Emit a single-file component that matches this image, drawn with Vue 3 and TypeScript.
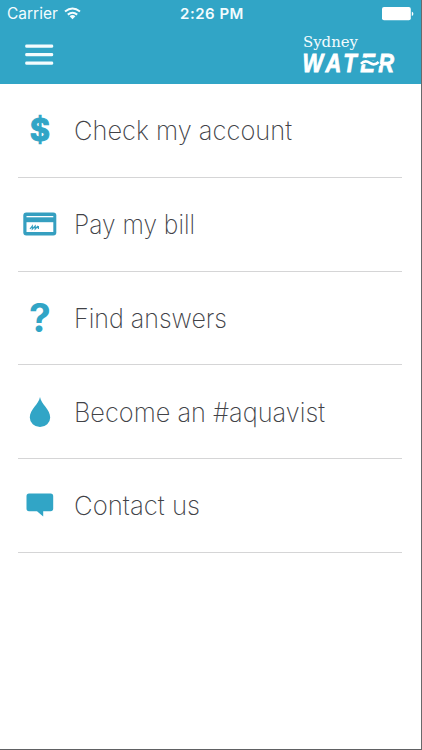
<script setup lang="ts">
interface MenuItem {
  id: string
  label: string
  width: number
}

const items: MenuItem[] = [
  { id: 'account', label: 'Check my account', width: 218 },
  { id: 'bill', label: 'Pay my bill', width: 121 },
  { id: 'answers', label: 'Find answers', width: 153 },
  { id: 'aquavist', label: 'Become an #aquavist', width: 251 },
  { id: 'contact', label: 'Contact us', width: 126 },
]
</script>

<template>
  <main class="screen">
    <header class="header">
      <div class="status">
        <div class="carrier">
          <span>Carrier</span>
          <svg class="wifi" width="17" height="13" viewBox="0 0 17 13" fill="none" stroke="#f4fcfe" stroke-width="2">
            <path d="M1 4.6Q8.5-1.6 16 4.6M3.8 7.6Q8.5 3.8 13.2 7.6" />
            <path d="M5.6 9.2Q8.5 7 11.4 9.2L8.5 12.2Z" fill="#f4fcfe" stroke="none" />
          </svg>
        </div>
        <span class="time">2:26 PM</span>
        <svg class="battery" width="33" height="14" viewBox="0 0 33 14" fill="#fff">
          <rect x="1" width="28.8" height="13.3" rx="2" />
          <path d="M30.8 4.4Q32.4 5 32.4 6.7T30.8 9Z" />
        </svg>
      </div>
      <div class="bar">
        <svg class="burger" width="29" height="22" viewBox="0 0 29 22" fill="#f4fcfe">
          <rect x="0.2" y="0.4" width="28" height="3.4" rx="1.4" />
          <rect x="0.2" y="8.9" width="28" height="3.4" rx="1.4" />
          <rect x="0.2" y="17.4" width="28" height="3.4" rx="1.4" />
        </svg>
        <svg class="logo" width="96" height="42" viewBox="0 0 96 42">
          <text class="sydney" x="0" y="12.6" textLength="55" lengthAdjust="spacingAndGlyphs">Sydney</text>
          <g transform="translate(-.5 38) scale(.84 1)">
            <text class="water" x="0" y="0" textLength="109" lengthAdjust="spacing">WATER</text>
          </g>
          <path d="M56 28.9C60 25.4 63 26.4 66.5 28.8S73 30.6 76 28.4" fill="none" stroke="#31a5c6" stroke-width="6.6" />
          <path d="M58 29.9C61 26.4 63.8 26.8 66.8 28.9S72.5 31 75.6 28" fill="none" stroke="#fff" stroke-width="2.6" />
        </svg>
      </div>
    </header>
    <nav class="menu">
      <a v-for="item in items" :key="item.id" class="item">
        <span class="icon">
          <svg v-if="item.id === 'account'" class="glyph" width="30" height="60" viewBox="0 0 30 60">
            <text class="dollar" x="15" y="41.2" text-anchor="middle">$</text>
          </svg>
          <svg v-else-if="item.id === 'bill'" width="34" height="24" viewBox="0 0 34 24">
            <rect x="0.3" y="0.4" width="33" height="23" rx="3" fill="#359fc0" />
            <rect x="3.5" y="4" width="26.8" height="1.3" fill="#fff" />
            <rect x="3.5" y="10.2" width="26.8" height="9.8" fill="#fff" />
            <path d="M7 17L9.3 14V17L12.2 14V17L15 14M12.2 17L12.2 14M15.4 14V17" fill="none" stroke="#359fc0" stroke-width="1.2" />
          </svg>
          <svg v-else-if="item.id === 'answers'" class="glyph" width="30" height="60" viewBox="0 0 30 60">
            <text class="question" x="15" y="43.8" text-anchor="middle">?</text>
          </svg>
          <svg v-else-if="item.id === 'aquavist'" width="22" height="30" viewBox="0 0 22 30" fill="#31a5c6">
            <path d="M11 0C12 7 21.2 12.5 21.2 20.4A10.2 9.6 0 0 1 .8 20.4C.8 12.5 10 7 11 0Z" />
          </svg>
          <svg v-else width="28" height="24" viewBox="0 0 28 24" fill="#31a5c6">
            <path d="M3 .6H24.6Q27.2.6 27.2 3.2V15.6Q27.2 18.2 24.6 18.2H17.2V23.4L11 18.2H3Q.5 18.2.5 15.6V3.2Q.5.6 3 .6Z" />
          </svg>
        </span>
        <svg class="label" width="300" height="40" viewBox="0 0 300 40">
          <text x="0" y="29.6" :textLength="item.width" lengthAdjust="spacingAndGlyphs">{{ item.label }}</text>
        </svg>
      </a>
    </nav>
  </main>
</template>

<style>
body {
  margin: 0;
}
</style>

<style scoped>
.screen {
  box-sizing: border-box;
  width: 422px;
  height: 750px;
  overflow: hidden;
  background: #fff;
  border-right: 1px solid #68696b;
  border-bottom: 1px solid #606163;
}

.header {
  height: 83.5px;
  background: #31a5c6;
}

.status {
  display: grid;
  grid-template-columns: 1fr auto 1fr;
  align-items: center;
  height: 27px;
  padding: 0 7px;
  color: #f4fcfe;
  font-family: Inter, sans-serif;
  font-size: 15.5px;
}

.carrier {
  display: flex;
  align-items: center;
  gap: 6.5px;
}

.time {
  padding-left: 3px;
  font-weight: 600;
  font-size: 15px;
  letter-spacing: 0.5px;
}

.battery {
  justify-self: end;
}

.bar {
  display: flex;
  align-items: flex-start;
  justify-content: space-between;
  padding: 7px 25px 0;
}

.burger {
  margin-top: 9.5px;
}

.logo {
  width: 96px;
  height: 42px;
  margin-right: -3px;
  overflow: visible;
}

.sydney {
  fill: #f4fcfe;
  font: 14.3px "DejaVu Serif", serif;
}

.water {
  fill: #fff;
  stroke: #fff;
  stroke-width: 0.8px;
  font: italic 700 26px "Liberation Sans", sans-serif;
}

.menu {
  padding: 0.6px 19px 0 18px;
}

.item {
  display: flex;
  align-items: center;
  box-sizing: border-box;
  height: 93.75px;
  border-bottom: 1.4px solid #d5d5d6;
}

.icon {
  display: flex;
  align-items: center;
  justify-content: center;
  width: 43px;
}

.glyph {
  fill: #31a5c6;
  font-family: Inter, sans-serif;
  font-weight: 700;
}

.dollar {
  stroke: #31a5c6;
  stroke-width: 1px;
  font-size: 31px;
}

.question {
  font-size: 39px;
}

.label {
  display: block;
  margin-left: 12.5px;
  fill: #414247;
  font: 200 26.5px Inter, sans-serif;
}
</style>
